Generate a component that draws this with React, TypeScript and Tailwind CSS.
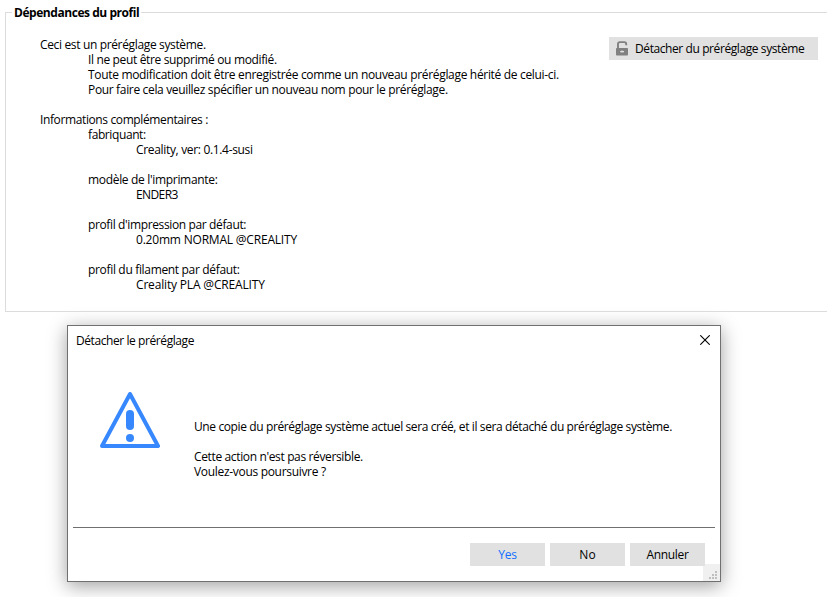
type LineProps = { children: string; className?: string };

function Line({ children, className = "" }: LineProps) {
  return <p className={`h-[15px] whitespace-pre leading-[15px] ${className}`}>{children}</p>;
}

function UnlockIcon() {
  return (
    <svg width="12" height="15" viewBox="0 0 12 15" className="shrink-0">
      <path d="M2 8V3Q2 1.1 3.9 1.1H8.3Q10.2 1.1 10.2 3V4.2" fill="none" stroke="#808080" strokeWidth="1.9" />
      <rect x="0" y="7" width="12" height="7.6" rx="0.8" fill="#808080" />
      <path d="M4.2 10.6H8M6 9.6V11.6" stroke="#e1e1e1" strokeWidth="1.2" />
    </svg>
  );
}

function WarningIcon() {
  return (
    <svg width="60" height="56" viewBox="0 0 60 56">
      <path d="M30 2L58 54H2Z" fill="none" stroke="#3788ff" strokeWidth="4" strokeLinejoin="round" />
      <path d="M30 22V34" stroke="#3788ff" strokeWidth="8" strokeLinecap="round" />
      <circle cx="30" cy="46" r="4" fill="#3788ff" />
    </svg>
  );
}

function DialogButton({ children, className = "" }: LineProps) {
  return (
    <button className={`flex h-[23px] w-[75px] items-center justify-center bg-[#e1e1e1] ${className}`}>
      {children}
    </button>
  );
}

function ProfileSection() {
  return (
    <section className="flex h-[312px] flex-col">
      <header className="flex h-[25px] items-center pl-[5px]">
        <div className="mt-[12px] h-[13px] w-[7px] self-start border-l border-t border-[#dcdcdc]" />
        <h1 className="pr-[2px] pl-[2px] font-bold leading-[15px] tracking-[-0.45px]">Dépendances du profil</h1>
        <div className="mt-[12px] h-px grow self-start bg-[#dcdcdc]" />
      </header>
      <div className="ml-[5px] flex grow justify-between border-b border-l border-[#dcdcdc] pr-[9px] pl-[34px] pt-[12px]">
        <div>
          <Line className="tracking-[-0.35px]">Ceci est un préréglage système.</Line>
          <div className="pl-12">
            <Line className="tracking-[-0.35px]">Il ne peut être supprimé ou modifié.</Line>
            <Line className="tracking-[-0.32px]">
              Toute modification doit être enregistrée comme un nouveau préréglage hérité de celui-ci.
            </Line>
            <Line className="tracking-[-0.34px]">
              Pour faire cela veuillez spécifier un nouveau nom pour le préréglage.
            </Line>
          </div>
          <Line className="mt-[15px] tracking-[-0.38px]">Informations complémentaires :</Line>
          <div className="pl-12">
            <Line className="tracking-[-0.4px]">fabriquant:</Line>
            <Line className="pl-12 tracking-[-0.33px]">Creality, ver: 0.1.4-susi</Line>
            <Line className="mt-[15px] tracking-[-0.32px]">modèle de l'imprimante:</Line>
            <Line className="pl-12 tracking-[-0.6px]">ENDER3</Line>
            <Line className="mt-[15px] tracking-[-0.37px]">profil d'impression par défaut:</Line>
            <Line className="pl-12 tracking-[-0.2px]">0.20mm NORMAL @CREALITY</Line>
            <Line className="mt-[15px] tracking-[-0.33px]">profil du filament par défaut:</Line>
            <Line className="pl-12 tracking-[-0.17px]">Creality PLA @CREALITY</Line>
          </div>
        </div>
        <button className="flex h-[23px] w-[209px] items-center bg-[#e1e1e1] pl-[7px]">
          <UnlockIcon />
          <span className="ml-[7px] whitespace-nowrap tracking-[-0.41px]">Détacher du préréglage système</span>
        </button>
      </div>
    </section>
  );
}

function DetachDialog() {
  return (
    <section className="mt-[13px] ml-[67px] flex h-[257px] w-[654px] flex-col border border-[#707070] bg-white shadow-[0_4px_18px_rgba(0,0,0,0.38)]">
      <header className="flex h-[30px] items-center justify-between pr-[10px] pl-[8px]">
        <h2 className="mb-px tracking-[-0.42px]">Détacher le préréglage</h2>
        <button aria-label="Fermer">
          <svg width="10" height="10" viewBox="0 0 10 10" className="-mt-[2px]">
            <path d="M0.3 0.3L9.7 9.7M9.7 0.3L0.3 9.7" stroke="#000" strokeWidth="1.1" />
          </svg>
        </button>
      </header>
      <div className="flex h-[171px] pl-[32px]">
        <div className="pt-[36px]">
          <WarningIcon />
        </div>
        <div className="ml-[34px] pt-[63px]">
          <Line className="tracking-[-0.385px]">
            Une copie du préréglage système actuel sera créé, et il sera détaché du préréglage système.
          </Line>
          <Line className="mt-[15px] tracking-[-0.36px]">Cette action n'est pas réversible.</Line>
          <Line className="tracking-[-0.31px]">Voulez-vous poursuivre ?</Line>
        </div>
      </div>
      <div className="mr-[5px] ml-[5px] h-px bg-[#707070]" />
      <footer className="flex grow">
        <div className="z-10 ml-[402px] flex gap-[5px] pt-[15px]">
          <DialogButton className="tracking-[-0.3px] text-[#0f6fff]">Yes</DialogButton>
          <DialogButton>No</DialogButton>
          <DialogButton className="tracking-[-0.3px]">Annuler</DialogButton>
        </div>
        <div className="-ml-[2px] h-[17px] w-[17px] shrink-0 self-end bg-[#f0f0f0]">
          <svg width="17" height="17" viewBox="0 0 17 17" fill="#bfbfbf">
            <path d="M12 7h2v2h-2zM9 10h2v2H9zM12 10h2v2h-2zM6 13h2v2H6zM9 13h2v2H9zM12 13h2v2h-2z" />
          </svg>
        </div>
      </footer>
    </section>
  );
}

export default function App() {
  return (
    <main className="h-[597px] w-[827px] overflow-hidden bg-white font-['Open_Sans','Noto_Sans',sans-serif] text-[12px] leading-[15px] text-black">
      <ProfileSection />
      <DetachDialog />
    </main>
  );
}
